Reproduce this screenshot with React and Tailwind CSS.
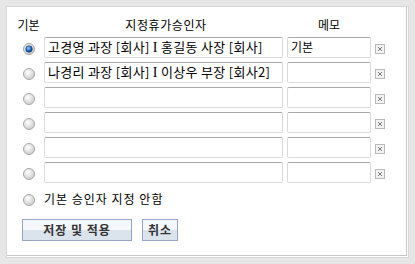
import React from "react";

const font = { fontFamily: '"Noto Sans CJK KR", "Noto Sans", sans-serif' };

const Radio = ({ checked }) => (
  <svg width="12" height="12" viewBox="0 0 12 12" className="mt-[2px]">
    <defs>
      <radialGradient id="rg" cx="40%" cy="35%" r="70%">
        <stop offset="0%" stopColor="#ffffff" />
        <stop offset="100%" stopColor="#c9c9c9" />
      </radialGradient>
      <radialGradient id="rb" cx="40%" cy="35%" r="70%">
        <stop offset="0%" stopColor="#9fd0ff" />
        <stop offset="55%" stopColor="#1d6fc9" />
        <stop offset="100%" stopColor="#0b3a78" />
      </radialGradient>
    </defs>
    <circle cx="6" cy="6" r="5.5" fill="url(#rg)" stroke="#a8a8a8" strokeWidth="1" />
    {checked && <circle cx="6" cy="6" r="3.3" fill="url(#rb)" stroke="#12345e" strokeWidth="0.6" />}
  </svg>
);

const XButton = () => (
  <svg width="10" height="10" viewBox="0 0 10 10" className="mt-[3px]">
    <rect x="0.5" y="0.5" width="9" height="9" fill="#f2f2f2" stroke="#b9b9b9" />
    <path d="M3 3 L7 7 M7 3 L3 7" stroke="#7a7a7a" strokeWidth="1" />
  </svg>
);

const Sep = () => (
  <span className="text-[14px]" style={{ fontFamily: '"Liberation Serif", serif' }}>I</span>
);

const rows = [
  {
    checked: true,
    name: (
      <span>
        고경영 과장 [회사] <Sep /> 홍길동 사장 [회사]
      </span>
    ),
    memo: "기본",
  },
  {
    checked: false,
    name: (
      <span>
        나경리 과장 [회사] <Sep /> 이상우 부장 [회사2]
      </span>
    ),
    memo: "",
  },
  { checked: false, name: null, memo: "" },
  { checked: false, name: null, memo: "" },
  { checked: false, name: null, memo: "" },
  { checked: false, name: null, memo: "" },
];

const inputBox =
  "h-[21px] border border-[#dadada] border-t-[#a8a8a8] rounded-[2px] bg-white text-black overflow-hidden whitespace-pre";

export default function App() {
  return (
    <div className="w-[415px] h-[264px] bg-[#e6e6e6] pt-[6px] pl-[6px]" style={font}>
      <div className="w-[403px] h-[252px] bg-white border border-[#d8d8d8]">
        <div className="h-[249px] w-[400px] border-r border-b border-[#c6c6c6] pl-[10px] pt-[9px]">
          <div className="grid grid-cols-[23px_239px_84px_10px] gap-x-[4px] gap-y-[4px] items-center">
            <div className="h-[17px] flex items-center justify-center text-[12px] text-black">기본</div>
            <div className="h-[17px] flex items-center justify-center text-[12px] text-black pl-[5px] tracking-[0.6px]">지정휴가승인자</div>
            <div className="h-[17px] flex items-center justify-center text-[12px] text-black">메모</div>
            <div />
            {rows.map((r, i) => (
              <React.Fragment key={i}>
                <div className="flex justify-center">
                  <Radio checked={r.checked} />
                </div>
                <div className={`${inputBox} flex items-center pl-[3px] text-[13px] tracking-[0.3px]`}>{r.name}</div>
                <div className={`${inputBox} pl-[3px] pt-[1px] text-[12px] leading-[16px]`}>{r.memo}</div>
                <div className="flex">
                  <XButton />
                </div>
              </React.Fragment>
            ))}
            <div className="flex justify-center h-[21px] items-center mt-[1px]">
              <Radio checked={false} />
            </div>
            <div className="col-span-3 h-[21px] flex items-center text-[12px] text-black mt-[1px] whitespace-pre tracking-[1px]">
              <span>기본 승인자 지정 안함</span>
            </div>
          </div>
          <div className="flex gap-[10px] mt-[10px] pl-[5px]">
            <button className="w-[110px] h-[22px] border border-[#93a7c3] bg-[linear-gradient(to_bottom,#f4f7fb_0%,#f4f7fb_50%,#dbe3ed_50%,#dbe3ed_100%)] text-[12px] font-bold text-[#333] tracking-[1px]">
              저장 및 적용
            </button>
            <button className="w-[36px] h-[22px] border border-[#93a7c3] bg-[linear-gradient(to_bottom,#f4f7fb_0%,#f4f7fb_50%,#dbe3ed_50%,#dbe3ed_100%)] text-[12px] font-bold text-[#333] tracking-[1px]">
              취소
            </button>
          </div>
        </div>
      </div>
    </div>
  );
}
